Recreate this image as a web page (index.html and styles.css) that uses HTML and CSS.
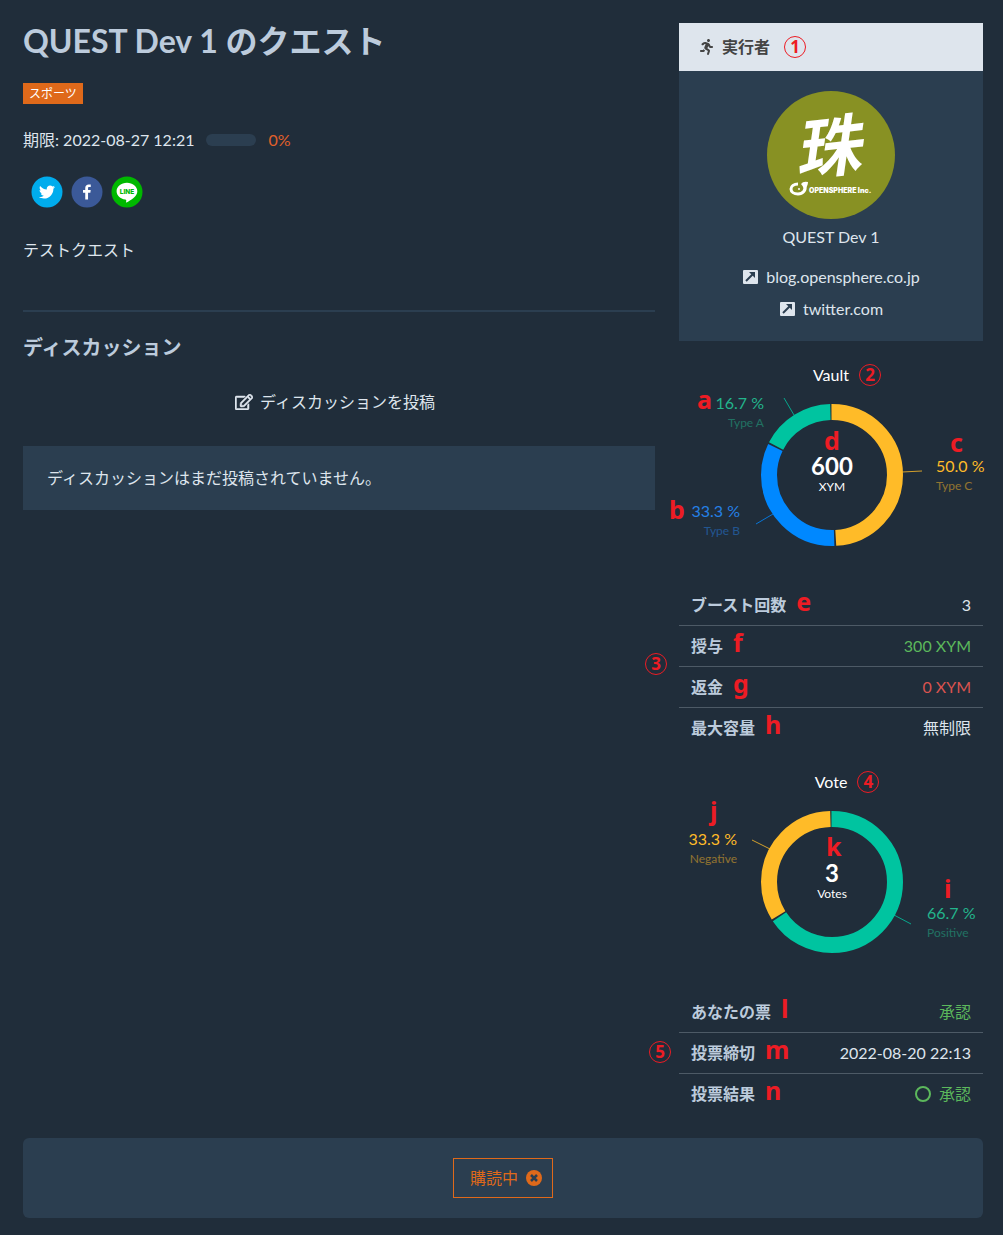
FILE: index.html
```html
<!DOCTYPE html>
<html lang="ja">
<head>
<meta charset="utf-8">
<meta name="viewport" content="width=device-width, initial-scale=1">
<title>QUEST Dev 1 のクエスト</title>
<link rel="stylesheet" href="styles.css">
</head>
<body>
<main class="page">
  <div class="columns">
    <section class="content">
      <h1 class="title">QUEST Dev 1 のクエスト</h1>
      <span class="tag">スポーツ</span>
      <div class="deadline">
        <span>期限: 2022-08-27 12:21</span>
        <span class="meter" role="progressbar" aria-valuenow="0" aria-label="進捗"></span>
        <span class="percent">0%</span>
      </div>
      <div class="share">
        <a href="#" aria-label="Twitter">
          <svg viewBox="0 0 64 64" width="32" height="32"><circle cx="32" cy="32" r="31" fill="#00aced"/><path fill="#fff" d="M48 22.1c-1.2.5-2.4.9-3.8 1 1.4-.8 2.4-2.1 2.9-3.6-1.3.8-2.7 1.3-4.2 1.6-1.2-1.3-2.9-2.1-4.8-2.1-3.6 0-6.6 2.9-6.6 6.6 0 .5.1 1 .2 1.5-5.5-.3-10.3-2.9-13.5-6.9-.6 1-.9 2.1-.9 3.3 0 2.3 1.2 4.3 2.9 5.5-1.1 0-2.1-.3-3-.8v.1c0 3.2 2.3 5.8 5.3 6.4-.6.1-1.1.2-1.7.2-.4 0-.8 0-1.2-.1.8 2.6 3.3 4.5 6.1 4.6-2.2 1.8-5.1 2.8-8.2 2.8-.5 0-1.1 0-1.6-.1 2.9 1.9 6.4 2.9 10.1 2.9 12.1 0 18.7-10 18.7-18.7v-.8c1.3-1 2.4-2.1 3.3-3.4z"/></svg>
        </a>
        <a href="#" aria-label="Facebook">
          <svg viewBox="0 0 64 64" width="32" height="32"><circle cx="32" cy="32" r="31" fill="#3b5998"/><path fill="#fff" d="M34.1 47V33.3h4.6l.7-5.3h-5.3v-3.4c0-1.5.4-2.6 2.6-2.6h2.8v-4.8c-.5-.1-2.2-.2-4.1-.2-4.1 0-6.9 2.5-6.9 7V28H24v5.3h4.5V47h5.6z"/></svg>
        </a>
        <a href="#" aria-label="LINE">
          <svg viewBox="0 0 64 64" width="32" height="32"><circle cx="32" cy="32" r="31" fill="#00b800"/><path fill="#fff" d="M52.6 30.3c0-9.3-9.3-16.8-20.7-16.8s-20.7 7.5-20.7 16.8c0 8.300 7.400 15.300 17.400 16.600.7.1 1.600.4 1.800 1 .2.500.1 1.300.1 1.800l-.3 1.800c-.1.500-.4 2.100 1.800 1.100s12.100-7.100 16.500-12.200c2.900-3.400 4.100-6.500 4.100-10.100z"/><text class="line-word" x="32" y="35" text-anchor="middle">LINE</text></svg>
        </a>
      </div>
      <p class="description">テストクエスト</p>
      <hr class="divider">
      <h2 class="subtitle">ディスカッション</h2>
      <a class="post" href="#">
        <svg viewBox="0 0 576 512" width="18" height="16" fill="currentColor" stroke="currentColor" stroke-width="16"><path d="M402.300 344.900l32-32c5-5 13.700-1.500 13.700 5.700V464c0 26.500-21.500 48-48 48H48c-26.500 0-48-21.500-48-48V112c0-26.500 21.500-48 48-48h273.500c7.100 0 10.700 8.600 5.700 13.700l-32 32c-1.500 1.500-3.500 2.300-5.700 2.300H48v352h352V350.500c0-2.100.8-4.100 2.300-5.600zm156.600-201.800L296.300 405.700l-90.400 10c-26.200 2.900-48.500-19.200-45.600-45.600l10-90.400L432.900 17.100c22.900-22.900 59.900-22.900 82.700 0l43.200 43.200c22.900 22.900 22.900 60 .1 82.800zM460.100 174L402 115.900 216.200 301.800l-7.300 65.300 65.300-7.300L460.100 174zm64.800-79.700l-43.200-43.200c-4.100-4.100-10.800-4.100-14.800 0L436 82l58.100 58.100 30.900-30.900c4-4.200 4-10.800-.1-14.900z"/></svg>
        ディスカッションを投稿
      </a>
      <div class="empty">ディスカッションはまだ投稿されていません。</div>
    </section>

    <aside class="side">
      <section class="card">
        <h2 class="card-head">
          <svg viewBox="0 0 416 512" width="13" height="16" fill="currentColor"><path d="M272 96c26.500 0 48-21.500 48-48S298.500 0 272 0s-48 21.500-48 48 21.500 48 48 48zM113.700 317.500l-14.800 34.500H32c-17.700 0-32 14.300-32 32s14.300 32 32 32h77.500c19.200 0 36.600-11.400 44.100-29.100l8.800-20.500-10.700-6.300c-17.400-10.300-30-25.300-38-42.600zM384 223.900h-44l-26.100-53.200c-12.500-25.500-35.500-44.200-61.800-50.900l-71.100-21.100c-28.600-6.800-58-.2-80.700 17.200l-39.700 30.400c-14 10.700-16.700 30.800-5.900 44.900 10.700 14 30.800 16.700 44.900 5.900l39.700-30.400c7.700-5.900 17.400-8 25.300-6.100l14.700 4.400-37.500 87.400c-12.600 29.500-1.300 64 26.500 80.400l85 50.200-27.500 87.800c-5.300 16.900 4.100 34.900 21 40.100 3.200 1 6.400 1.500 9.600 1.500 13.600 0 26.200-8.800 30.500-22.400l31.600-101c5.900-20.800-3-43-21.600-54.100l-61.200-36.100 31.300-78.300 20.300 41.400c8 16.300 24.900 26.900 43.100 26.900H384c17.700 0 32-14.300 32-32s-14.300-32-32-32z"/></svg>
          <span>実行者</span>
          <span class="number">1</span>
        </h2>
        <div class="card-body">
          <svg class="avatar" viewBox="0 0 128 128" width="128" height="128" role="img" aria-label="OPENSPHERE Inc.">
            <circle cx="64" cy="64" r="64" fill="#889123"/>
            <text class="brush" x="60" y="80" text-anchor="middle" transform="rotate(-6 64 60)">珠</text>
            <path fill="none" stroke="#fff" stroke-width="3" d="M31 93c-4 0-7 2-7 5s3 5 7 5c5 0 8-4 7-8"/>
            <path fill="#fff" d="M34 93q2-3 7-2 0 5-4 7-1-3-3-5z"/>
            <circle cx="32" cy="98" r="1" fill="#fff"/>
            <text class="brand" x="42" y="102">OPENSPHERE Inc.</text>
          </svg>
          <p class="name">QUEST Dev 1</p>
          <ul class="links">
            <li><a href="#"><svg viewBox="0 0 16 16" width="16" height="16"><rect x="1" y="1" width="15" height="14" rx="1" fill="currentColor"/><path d="m4 12 7-7" stroke="#2b3e50" stroke-width="2"/><path d="M7 3h6v6z" fill="#2b3e50"/></svg>blog.opensphere.co.jp</a></li>
            <li><a href="#"><svg viewBox="0 0 16 16" width="16" height="16"><rect x="1" y="1" width="15" height="14" rx="1" fill="currentColor"/><path d="m4 12 7-7" stroke="#2b3e50" stroke-width="2"/><path d="M7 3h6v6z" fill="#2b3e50"/></svg>twitter.com</a></li>
          </ul>
        </div>
      </section>

      <section class="panel">
        <h2 class="chart-title">Vault<span class="number">2</span></h2>
        <svg class="chart" viewBox="0 0 304 198" height="198" width="304">
          <g class="ring" transform="rotate(-90 153 88)">
            <circle class="yellow" cx="153" cy="88" r="63" pathLength="360" stroke-dasharray="177 183" stroke-dashoffset="0.500"/>
            <circle class="blue" cx="153" cy="88" r="63" pathLength="360" stroke-dasharray="118 242" stroke-dashoffset="-178"/>
            <circle class="green" cx="153" cy="88" r="63" pathLength="360" stroke-dasharray="61 299" stroke-dashoffset="-297.500"/>
          </g>
          <path class="lead green" d="M105 11 115 28"/>
          <path class="lead blue" d="M77 137 94 127"/>
          <path class="lead yellow" d="M223 85 243 84"/>
          <g class="label green" text-anchor="end"><text x="85" y="22">16.7 %</text><text class="kind" x="85" y="40">Type A</text></g>
          <g class="label blue" text-anchor="end"><text x="61" y="130">33.3 %</text><text class="kind" x="61" y="148">Type B</text></g>
          <g class="label yellow"><text x="257" y="85">50.0 %</text><text class="kind" x="257" y="103">Type C</text></g>
          <text class="total" x="153" y="88">600</text>
          <text class="unit" x="153" y="104">XYM</text>
          <text class="mark" x="18" y="22">a</text>
          <text class="mark" x="-10" y="132">b</text>
          <text class="mark" x="271" y="65">c</text>
          <text class="mark" x="145" y="63">d</text>
        </svg>
        <div class="facts">
          <span class="number side-three">3</span>
          <table>
            <tr><th scope="row">ブースト回数<span class="mark">e</span></th><td>3</td></tr>
            <tr><th scope="row">授与<span class="mark">f</span></th><td class="good">300 XYM</td></tr>
            <tr><th scope="row">返金<span class="mark">g</span></th><td class="bad">0 XYM</td></tr>
            <tr><th scope="row">最大容量<span class="mark">h</span></th><td>無制限</td></tr>
          </table>
        </div>
      </section>

      <section class="panel">
        <h2 class="chart-title">Vote<span class="number">4</span></h2>
        <svg class="chart" viewBox="0 0 304 198" height="198" width="304">
          <g class="ring" transform="rotate(-90 153 88)">
            <circle class="green" cx="153" cy="88" r="63" pathLength="360" stroke-dasharray="237 123" stroke-dashoffset="0.500"/>
            <circle class="yellow" cx="153" cy="88" r="63" pathLength="360" stroke-dasharray="120.500 239.500" stroke-dashoffset="-238"/>
          </g>
          <path class="lead yellow" d="M73 46 91 55"/>
          <path class="lead green" d="M215 121 232 130"/>
          <g class="label yellow" text-anchor="end"><text x="58" y="51">33.3 %</text><text class="kind" x="58" y="69">Negative</text></g>
          <g class="label green"><text x="248" y="125">66.7 %</text><text class="kind" x="248" y="143">Positive</text></g>
          <text class="total" x="153" y="88">3</text>
          <text class="unit" x="153" y="104">Votes</text>
          <text class="mark" x="31" y="26">j</text>
          <text class="mark" x="147" y="62">k</text>
          <text class="mark" x="265" y="104">i</text>
        </svg>
        <div class="facts">
          <span class="number side-five">5</span>
          <table>
            <tr><th scope="row">あなたの票<span class="mark">l</span></th><td class="good">承認</td></tr>
            <tr><th scope="row">投票締切<span class="mark">m</span></th><td>2022-08-20 22:13</td></tr>
            <tr><th scope="row">投票結果<span class="mark">n</span></th><td class="good"><svg class="ok" viewBox="0 0 16 16" width="16" height="16"><circle cx="8" cy="8" r="7" fill="none" stroke="currentColor" stroke-width="2"/></svg>承認</td></tr>
          </table>
        </div>
      </section>
    </aside>
  </div>

  <div class="bar">
    <button class="subscribe" type="button">購読中
      <svg viewBox="0 0 16 16" width="16" height="16"><circle cx="8" cy="8" r="8" fill="currentColor"/><path d="m5 5 6 6m0-6-6 6" stroke="#2b3e50" stroke-width="2.500"/></svg>
    </button>
  </div>
</main>
</body>
</html>
```
FILE: styles.css
```css
* { box-sizing: border-box; }

body {
  margin: 0;
  background: #202d3a;
  color: #dee5ed;
  font: 16px/24px Lato, "Noto Sans CJK JP", sans-serif;
}

h1, h2, p, ul { margin: 0; padding: 0; }
a { color: inherit; text-decoration: none; }
svg { flex: none; }

.page { padding: 23px 20px 17px 23px; }

.columns {
  display: grid;
  grid-template-columns: minmax(0, 1fr) 304px;
  gap: 24px;
}

.content {
  display: flex;
  flex-direction: column;
  align-items: stretch;
}

.title {
  font-size: 32px;
  line-height: 36px;
  font-weight: 700;
  color: #bccbdc;
}

.tag {
  align-self: flex-start;
  margin-top: 24px;
  padding: 0 6px;
  background: #df691a;
  color: #fff;
  font-size: 12px;
  line-height: 21px;
}

.deadline {
  display: flex;
  align-items: center;
  gap: 12px;
  margin-top: 24px;
}

.meter {
  width: 50px;
  height: 12px;
  border-radius: 6px;
  background: #2b3e50;
}

.percent { color: #e0602a; }

.share {
  display: flex;
  gap: 8px;
  margin: 24px 0 0 8px;
}
.share a, .share svg { display: block; }

.line-word {
  font: 800 13px Inter, sans-serif;
  fill: #00b800;
}

.description { margin-top: 30px; }

.divider {
  width: 100%;
  height: 2px;
  margin: 48px 0 0;
  border: 0;
  background: #2b3e50;
}

.subtitle {
  margin-top: 23px;
  font-size: 20px;
  line-height: 24px;
  color: #bccbdc;
}

.post {
  display: flex;
  align-items: center;
  justify-content: center;
  gap: 7px;
  margin-top: 31px;
  padding-right: 8px;
}

.empty {
  margin-top: 32px;
  padding: 20px 24px;
  background: #2b3e50;
}

.card { background: #2b3e50; }

.card-head {
  display: flex;
  align-items: center;
  height: 48px;
  padding: 0 21px;
  gap: 9px;
  background: #dee5ed;
  color: #444;
  font-size: 16px;
  font-weight: 700;
}

.card-body {
  display: flex;
  flex-direction: column;
  align-items: center;
  padding: 20px;
}

.avatar { display: block; }

.brush {
  font: italic 700 66px "Noto Sans CJK JP", sans-serif;
  fill: #fff;
}

.brand {
  font: 900 7px Inter, sans-serif;
  fill: #fff;
}

.name { margin-top: 6px; }

.links {
  display: flex;
  flex-direction: column;
  align-items: center;
  gap: 8px;
  margin-top: 16px;
  list-style: none;
}
.links a {
  display: flex;
  align-items: center;
  gap: 8px;
}

.number {
  display: inline-block;
  width: 22px;
  height: 22px;
  margin-left: 5px;
  border: 1px solid #ed1c24;
  border-radius: 50%;
  color: #ed1c24;
  font: 700 17px/20px "Noto Sans", sans-serif;
  text-align: center;
}

.panel { padding-top: 22px; }

.chart-title {
  display: flex;
  align-items: center;
  justify-content: center;
  gap: 5px;
  padding-left: 32px;
  font-size: 16px;
  font-weight: 400;
  line-height: 24px;
  color: #fff;
}

.chart {
  display: block;
  overflow: visible;
}

.green { color: #00c4a0; }
.blue { color: #0088ff; }
.yellow { color: #ffbb28; }

.ring circle {
  fill: none;
  stroke: currentColor;
  stroke-width: 16px;
}
.lead { fill: none; stroke: currentColor; opacity: 0.8; }

.label { fill: currentColor; font-size: 16px; }
.label.green { color: #23b58c; }
.label.blue { color: #2580e6; }
.kind { font-size: 12px; opacity: 0.5; }

.total, .unit { fill: #fff; text-anchor: middle; }
.total { font-size: 24px; font-weight: 700; }
.unit { font-size: 12px; }

.mark {
  fill: #ed1c24;
  color: #ed1c24;
  font: 700 25px/24px "Noto Sans", sans-serif;
}

.facts { position: relative; }
.facts table { width: 100%; border-spacing: 0; }
.facts th, .facts td {
  height: 41px;
  padding: 0 12px;
  border-bottom: 1px solid #4d5a66;
  line-height: 24px;
}
.facts tr:last-child > * { height: 40px; border-bottom: 0; }
.facts th { text-align: left; color: #bccbdc; white-space: nowrap; }
.facts td { text-align: right; }
.facts th .mark { margin-left: 10px; line-height: 0; }

.facts .good { color: #5cb85c; }
.facts .bad { color: #d9534f; }
.ok { margin-right: 8px; vertical-align: -2px; }

.side-three, .side-five {
  position: absolute;
  margin: 0;
}
.side-three { left: -34px; top: 68px; }
.side-five { left: -30px; top: 49px; }

.bar {
  display: flex;
  justify-content: center;
  margin-top: 24px;
  padding: 20px;
  border-radius: 6px;
  background: #2b3e50;
}

.subscribe {
  display: flex;
  align-items: center;
  gap: 8px;
  height: 40px;
  padding: 0 10px 0 16px;
  border: 1px solid #df691a;
  background: transparent;
  color: #df691a;
  font: inherit;
}
```
